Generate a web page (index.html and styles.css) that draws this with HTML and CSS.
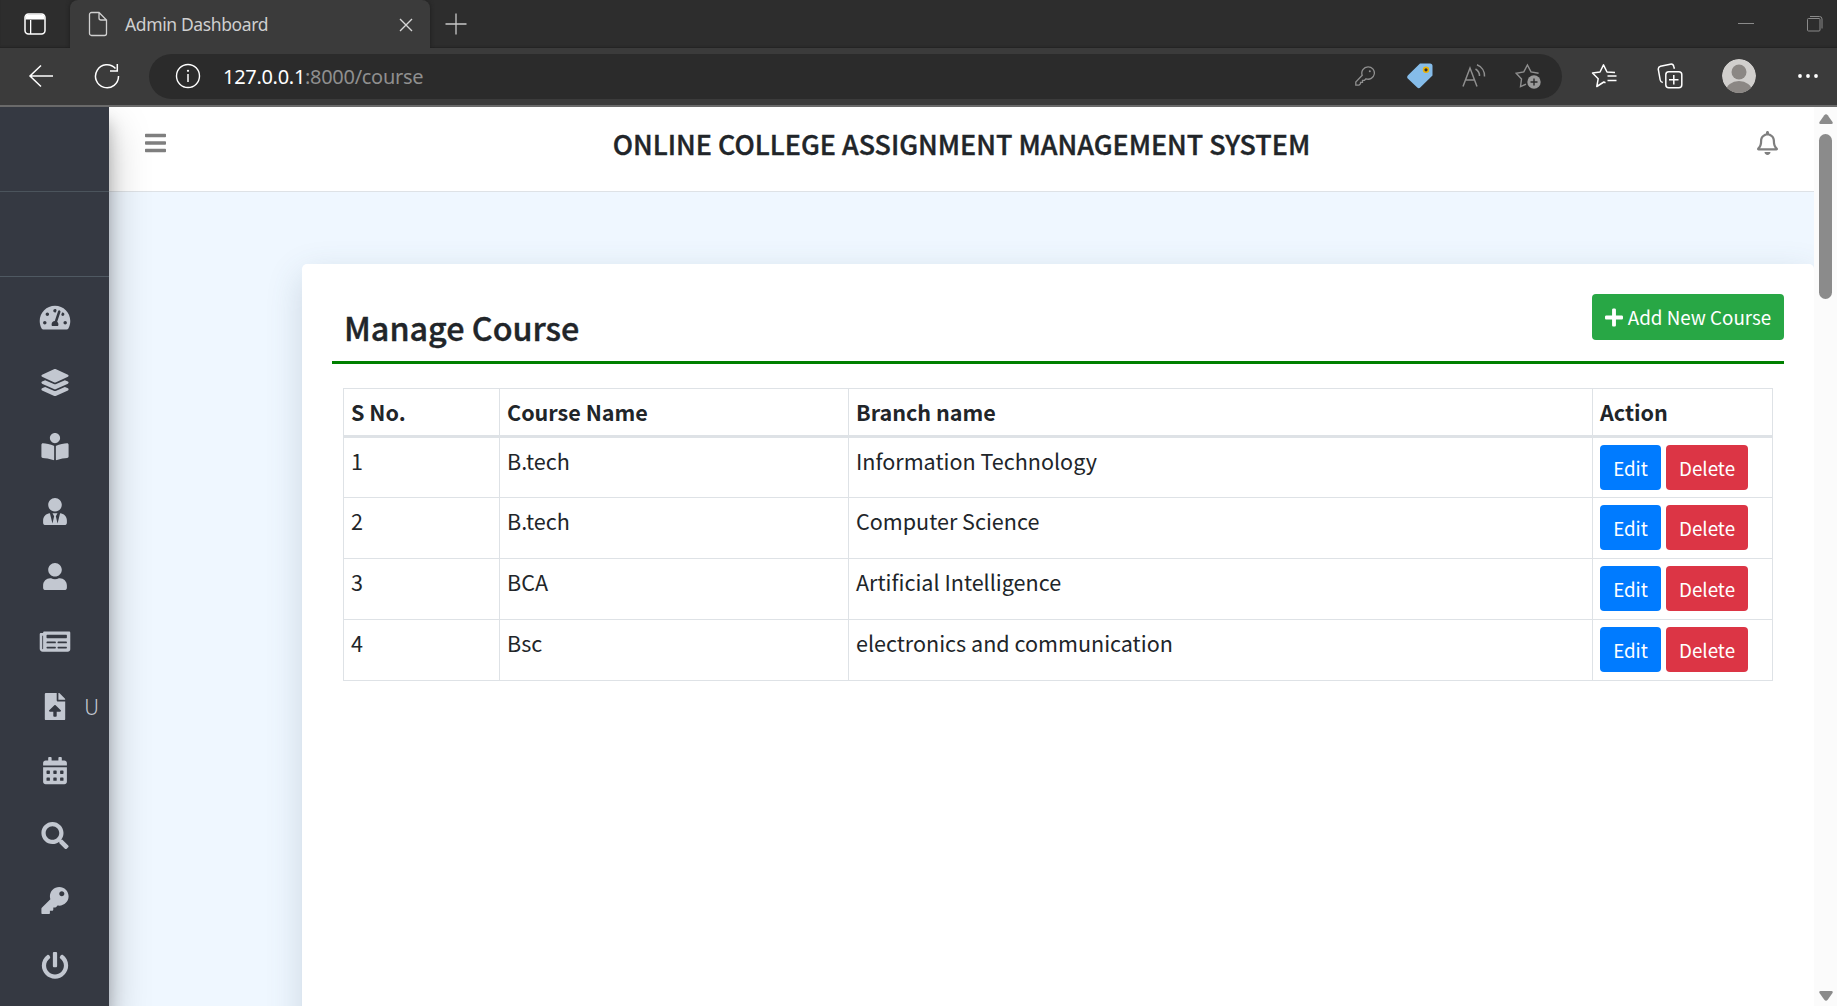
FILE: index.html
```html
<!DOCTYPE html>
<html lang="en">
<head>
<meta charset="utf-8">
<title>Admin Dashboard</title>
<link rel="stylesheet" href="styles.css">
</head>
<body>
<header class="browser">
  <div class="tabstrip">
    <svg class="tab-actions" width="22" height="22" viewBox="0 0 22 22"><rect x="1" y="1" width="20" height="20" rx="3.5" fill="none" stroke="#fff" stroke-width="1.5"/><path d="M1.500 4.500a3 3 0 0 1 3-3h13a3 3 0 0 1 3 3V6.500h-19zM6 6v15h1.300V6z" fill="#fff"/></svg>
    <div class="tab">
      <svg class="tab-file" width="20" height="26" viewBox="0 0 20 26" fill="none" stroke="#d0d0d0" stroke-width="1.300"><path d="M3.500 1.500h7.500L18.500 9v13.500a2 2 0 0 1-2 2h-13a2 2 0 0 1-2-2v-19a2 2 0 0 1 2-2zM11 1.500V7a2 2 0 0 0 2 2h5.500"/></svg>
      <span class="tab-title">Admin Dashboard</span>
      <svg class="tab-close" width="14" height="14" viewBox="0 0 14 14" stroke="#d6d6d6" stroke-width="1.400"><path d="M1 1l12 12M13 1L1 13"/></svg>
    </div>
    <svg class="tab-new" width="22" height="22" viewBox="0 0 22 22" stroke="#c8c8c8" stroke-width="1.300"><path d="M11 .5v21M.5 11h21"/></svg>
    <svg class="win-min" width="16" height="16" viewBox="0 0 16 16"><path d="M0 7.500h16" stroke="#8a8a8a"/></svg>
    <svg class="win-max" width="16" height="16" viewBox="0 0 16 16" fill="none" stroke="#8a8a8a"><rect x=".5" y="2.500" width="12.500" height="12.500" rx="1"/><path d="M3 .5h9.500a2.500 2.500 0 0 1 2.500 2.500v9.500"/></svg>
  </div>
  <div class="toolbar">
    <svg class="nav-back" width="26" height="24" viewBox="0 0 26 24" fill="none" stroke="#fff" stroke-width="1.500"><path d="M25 12H2M13 1.500L2 12l11 10.500"/></svg>
    <svg class="nav-reload" width="26" height="26" viewBox="0 0 26 26" fill="none" stroke="#fff" stroke-width="1.500"><path d="M24.500 13A11.500 11.500 0 1 1 21.500 5.500M23.300 1v7h-7.300"/></svg>
    <div class="address">
      <svg class="info" width="26" height="26" viewBox="0 0 26 26"><circle cx="13" cy="13" r="11.500" fill="none" stroke="#fff" stroke-width="1.400"/><path d="M13 11v8" stroke="#fff" stroke-width="1.500"/><circle cx="13" cy="7.800" r="1.100" fill="#fff"/></svg>
      <span class="url"><b>127.0.0.1</b>:8000/course</span>
      <svg class="a-key" width="20" height="20" viewBox="0 0 20 20" fill="none" stroke="#8f8f8f" stroke-width="1.300"><path d="M13 .8a6.200 6.200 0 1 1-2 12L9.500 14.300H7.500v2H5.500v1.500L4 19.200H.8V16L7.200 9.300A6.300 6.300 0 0 1 13 .8z"/><circle cx="14.800" cy="5.300" r="1" fill="#8f8f8f" stroke="none"/></svg>
      <svg class="a-tag" width="26" height="26" viewBox="0 0 26 26"><path d="M13 .5h10A2.500 2.500 0 0 1 25.500 3v9.500L13.500 24.300a2.500 2.500 0 0 1-3.500 0L1 15.800a2.500 2.500 0 0 1 0-3.500z" fill="#85bce9"/><circle cx="19" cy="6.800" r="3.200" fill="#eab308"/><circle cx="19" cy="6.800" r="1.600" fill="#30302c"/></svg>
      <svg class="a-read" width="24" height="24" viewBox="0 0 24 24" fill="none" stroke="#8f8f8f" stroke-width="1.500"><path d="M1 22.500L8 4l7 18.500M3.500 16h9M13.500 5a8 8 0 0 1 4 7M15 .8a12 12 0 0 1 7.500 11.700"/></svg>
      <svg class="a-star" width="26" height="26" viewBox="0 0 26 26" fill="none" stroke="#8f8f8f" stroke-width="1.400"><path d="M11 21.200l-5.500 2.500 1-7.700L1.200 10.300l7.600-1.400L12.400 2l3.600 6.900 7.600 1.400"/><circle cx="19" cy="19" r="6.700" fill="#9a9a9a" stroke="none"/><path d="M19 15.500v7M15.500 19h7" stroke="#2b2b2b"/></svg>
    </div>
    <svg class="t-fav" width="26" height="26" viewBox="0 0 26 26" fill="none" stroke="#fff" stroke-width="1.500" stroke-linejoin="round"><path d="M14.500 19.800L12.800 19 5.800 23.500l1.400-7.800L1.500 10l7.500-1L12.500 1.800 16 9l8 .5M16.500 13h9M16.500 17.500h9"/></svg>
    <svg class="t-coll" width="26" height="26" viewBox="0 0 26 26" fill="none" stroke="#fff" stroke-width="1.500"><rect x="8.800" y="8.800" width="16" height="16" rx="3"/><path d="M16.800 12v9.500M12 16.800h9.500M5.800 19.500A3 3 0 0 1 3.200 17L1.300 6.500A3 3 0 0 1 3.500 3.300L13.300 1.200A3 3 0 0 1 16.800 3.500l.6 2.300"/></svg>
    <svg class="t-user" width="34" height="34" viewBox="0 0 34 34"><defs><clipPath id="av"><circle cx="17" cy="17" r="17"/></clipPath></defs><g clip-path="url(#av)"><circle cx="17" cy="17" r="17" fill="#d1cfcd"/><circle cx="17" cy="13" r="7.500" fill="#8b8784"/><ellipse cx="17" cy="32" rx="13" ry="10" fill="#8b8784"/></g></svg>
    <svg class="t-more" width="20" height="6" viewBox="0 0 20 6" fill="#fff"><circle cx="2" cy="3" r="1.900"/><circle cx="10" cy="3" r="1.900"/><circle cx="18" cy="3" r="1.900"/></svg>
  </div>
</header>
<div class="page">
  <aside class="sidebar">
    <div class="brand"></div>
    <div class="user-panel"></div>
    <nav class="menu">
      <a class="item"><svg viewBox="-32 0 640 512"><path d="M288 32C128.940 32 0 160.940 0 320c0 52.800 14.250 102.260 39.060 144.800 5.610 9.620 16.300 15.200 27.440 15.200h443c11.140 0 21.830-5.580 27.440-15.200C561.750 422.260 576 372.800 576 320c0-159.060-128.940-288-288-288zm0 64c14.710 0 26.580 10.130 30.320 23.650-1.110 2.260-2.640 4.230-3.450 6.670l-9.220 27.670c-5.130 3.490-10.970 6.010-17.640 6.010-17.670 0-32-14.330-32-32S270.330 96 288 96zM96 384c-17.670 0-32-14.330-32-32s14.330-32 32-32 32 14.330 32 32-14.330 32-32 32zm48-160c-17.670 0-32-14.330-32-32s14.330-32 32-32 32 14.330 32 32-14.330 32-32 32zm246.770-72.410l-61.330 184C343.130 347.330 352 364.540 352 384c0 11.720-3.380 22.550-8.880 32H232.880c-5.500-9.450-8.880-20.280-8.880-32 0-33.940 26.500-61.430 59.900-63.590l61.340-184.010c4.170-12.560 17.730-19.450 30.360-15.170 12.570 4.190 19.350 17.790 15.170 30.360zm14.660 57.200l15.520-46.550c3.470-1.290 7.130-2.230 11.050-2.230 17.670 0 32 14.330 32 32s-14.330 32-32 32c-11.380-.01-20.890-6.280-26.570-15.220zM480 384c-17.670 0-32-14.330-32-32s14.330-32 32-32 32 14.330 32 32-14.330 32-32 32z"/></svg></a>
      <a class="item"><svg viewBox="-64 0 640 512"><path d="M12.410 148.020l232.940 105.670c6.800 3.090 14.490 3.090 21.290 0l232.940-105.670c16.550-7.510 16.550-32.520 0-40.030L266.650 2.310a25.607 25.607 0 0 0-21.290 0L12.410 107.980c-16.550 7.510-16.550 32.530 0 40.040zm487.180 88.280l-58.090-26.330-161.640 73.270c-7.560 3.430-15.590 5.170-23.860 5.170s-16.290-1.740-23.860-5.170L70.510 209.970l-58.100 26.330c-16.550 7.500-16.550 32.500 0 40l232.940 105.590c6.800 3.080 14.490 3.080 21.290 0L499.590 276.300c16.550-7.500 16.550-32.500 0-40zm0 127.800l-57.870-26.230-161.860 73.370c-7.560 3.430-15.590 5.170-23.860 5.170s-16.290-1.740-23.860-5.170L70.290 337.870 12.410 364.100c-16.550 7.500-16.550 32.500 0 40l232.940 105.590c6.800 3.080 14.490 3.080 21.290 0L499.590 404.100c16.550-7.500 16.550-32.500 0-40z"/></svg></a>
      <a class="item"><svg viewBox="-64 0 640 512"><path d="M352 96c0-53.020-42.980-96-96-96s-96 42.980-96 96 42.980 96 96 96 96-42.980 96-96zM233.590 241.100c-59.330-36.320-155.430-46.300-203.790-49.050C13.550 191.130 0 203.510 0 219.140v222.800c0 14.330 11.590 26.280 26.490 27.050 43.660 2.290 131.990 10.680 193.040 41.430 9.370 4.720 20.480-1.710 20.480-11.870V252.560c-.01-4.670-2.320-8.950-6.420-11.460zm248.610-49.050c-48.350 2.740-144.460 12.730-203.780 49.050-4.100 2.510-6.410 6.960-6.410 11.630v245.790c0 10.190 11.140 16.630 20.540 11.900 61.040-30.720 149.320-39.110 192.970-41.400 14.900-.78 26.490-12.730 26.490-27.060V219.140c-.01-15.630-13.560-28.010-29.810-27.090z"/></svg></a>
      <a class="item"><svg viewBox="-96 0 640 512"><path d="M224 256c70.700 0 128-57.300 128-128S294.700 0 224 0 96 57.300 96 128s57.300 128 128 128zm95.800 32.600L272 480l-32-136 32-56h-96l32 56-32 136-47.800-191.400C56.900 292 0 350.300 0 422.400V464c0 26.500 21.500 48 48 48h352c26.500 0 48-21.500 48-48v-41.600c0-72.100-56.900-130.400-128.200-133.800z"/></svg></a>
      <a class="item"><svg viewBox="-96 0 640 512"><path d="M224 256c70.700 0 128-57.300 128-128S294.700 0 224 0 96 57.300 96 128s57.300 128 128 128zm89.600 32h-16.700c-22.200 10.200-46.900 16-72.900 16s-50.600-5.800-72.900-16h-16.700C60.200 288 0 348.200 0 422.400V464c0 26.500 21.500 48 48 48h352c26.500 0 48-21.500 48-48v-41.600c0-74.200-60.200-134.400-134.400-134.400z"/></svg></a>
      <a class="item"><svg viewBox="-32 0 640 512"><path fill-rule="evenodd" d="M552 64H88c-13.255 0-24 10.745-24 24v8H24c-13.255 0-24 10.745-24 24v272c0 30.928 25.072 56 56 56h472c26.510 0 48-21.490 48-48V88c0-13.255-10.745-24-24-24zM56 400a8 8 0 0 1-8-8V144h16v248a8 8 0 0 1-8 8zm236-16H140c-6.627 0-12-5.373-12-12v-8c0-6.627 5.373-12 12-12h152c6.627 0 12 5.373 12 12v8c0 6.627-5.373 12-12 12zm208 0H348c-6.627 0-12-5.373-12-12v-8c0-6.627 5.373-12 12-12h152c6.627 0 12 5.373 12 12v8c0 6.627-5.373 12-12 12zm-208-96H140c-6.627 0-12-5.373-12-12v-8c0-6.627 5.373-12 12-12h152c6.627 0 12 5.373 12 12v8c0 6.627-5.373 12-12 12zm208 0H348c-6.627 0-12-5.373-12-12v-8c0-6.627 5.373-12 12-12h152c6.627 0 12 5.373 12 12v8c0 6.627-5.373 12-12 12zm0-96H140c-6.627 0-12-5.373-12-12v-40c0-6.627 5.373-12 12-12h360c6.627 0 12 5.373 12 12v40c0 6.627-5.373 12-12 12z"/></svg></a>
      <a class="item"><svg viewBox="-128 0 640 512"><path d="M224 136V0H24C10.700 0 0 10.700 0 24v464c0 13.300 10.700 24 24 24h336c13.300 0 24-10.700 24-24V160H248c-13.200 0-24-10.800-24-24zm65.180 216.010H224v80c0 8.840-7.160 16-16 16h-32c-8.840 0-16-7.160-16-16v-80H94.820c-14.280 0-21.410-17.290-11.270-27.360l96.420-95.700c6.650-6.610 17.390-6.610 24.040 0l96.420 95.700c10.150 10.070 3.030 27.360-11.250 27.360zM377 105L279.100 7c-4.500-4.500-10.600-7-17-7H256v128h128v-6.100c0-6.300-2.500-12.400-7-16.900z"/></svg><span class="label">U</span></a>
      <a class="item"><svg viewBox="-96 0 640 512"><path fill-rule="evenodd" d="M0 464c0 26.500 21.500 48 48 48h352c26.500 0 48-21.500 48-48V192H0zM332 256h40a12 12 0 0 1 12 12v40a12 12 0 0 1-12 12h-40a12 12 0 0 1-12-12v-40a12 12 0 0 1 12-12zm0 128h40a12 12 0 0 1 12 12v40a12 12 0 0 1-12 12h-40a12 12 0 0 1-12-12v-40a12 12 0 0 1 12-12zM204 256h40a12 12 0 0 1 12 12v40a12 12 0 0 1-12 12h-40a12 12 0 0 1-12-12v-40a12 12 0 0 1 12-12zm0 128h40a12 12 0 0 1 12 12v40a12 12 0 0 1-12 12h-40a12 12 0 0 1-12-12v-40a12 12 0 0 1 12-12zM76 256h40a12 12 0 0 1 12 12v40a12 12 0 0 1-12 12H76a12 12 0 0 1-12-12v-40a12 12 0 0 1 12-12zm0 128h40a12 12 0 0 1 12 12v40a12 12 0 0 1-12 12H76a12 12 0 0 1-12-12v-40a12 12 0 0 1 12-12zM400 64h-48V16c0-8.800-7.200-16-16-16h-32c-8.800 0-16 7.200-16 16v48H160V16c0-8.800-7.200-16-16-16h-32c-8.800 0-16 7.200-16 16v48H48C21.500 64 0 85.500 0 112v48h448v-48c0-26.500-21.500-48-48-48z"/></svg></a>
      <a class="item"><svg viewBox="-64 0 640 512"><path d="M505 442.700L405.300 343c-4.500-4.500-10.600-7-17-7H372c27.600-35.300 44-79.700 44-128C416 93.100 322.900 0 208 0S0 93.100 0 208s93.100 208 208 208c48.300 0 92.700-16.400 128-44v16.300c0 6.400 2.500 12.500 7 17l99.700 99.700c9.400 9.400 24.600 9.400 33.900 0l28.300-28.300c9.400-9.400 9.400-24.600.1-34zM208 336c-70.700 0-128-57.200-128-128 0-70.700 57.200-128 128-128 70.700 0 128 57.200 128 128 0 70.700-57.200 128-128 128z"/></svg></a>
      <a class="item"><svg viewBox="-64 0 640 512"><path d="M512 176.001C512 273.203 433.202 352 336 352c-11.220 0-22.190-1.062-32.827-3.069l-24.012 27.014A23.999 23.999 0 0 1 261.223 384H224v40c0 13.255-10.745 24-24 24h-40v40c0 13.255-10.745 24-24 24H24c-13.255 0-24-10.745-24-24v-78.059c0-6.365 2.529-12.470 7.029-16.971l161.802-161.802C163.108 213.814 160 195.271 160 176 160 78.798 238.797.001 335.999 0 433.488-.001 512 78.511 512 176.001zM336 128c0 26.510 21.490 48 48 48s48-21.490 48-48-21.490-48-48-48-48 21.490-48 48z"/></svg></a>
      <a class="item"><svg viewBox="-64 0 640 512"><path d="M400 54.100c63 45 104 118.600 104 201.900 0 136.800-110.800 247.700-247.500 248C120 504.300 8.200 393 8 256.400 7.900 173.100 48.900 99.300 111.800 54.200c11.700-8.300 28-4.800 35 7.700L162.600 90c5.900 10.500 3.100 23.800-6.600 31-41.500 30.800-68 79.600-68 134.900-.1 92.300 74.500 168.100 168 168.100 91.600 0 168.600-74.200 168-169.100-.3-51.800-24.700-101.800-68.100-134-9.700-7.200-12.400-20.500-6.500-30.900l15.800-28.100c7-12.400 23.200-16.100 34.800-7.800zM296 264V24c0-13.300-10.700-24-24-24h-32c-13.300 0-24 10.700-24 24v240c0 13.300 10.700 24 24 24h32c13.300 0 24-10.700 24-24z"/></svg></a>
    </nav>
  </aside>
  <div class="main">
    <div class="navbar">
      <svg class="bars" viewBox="0 0 448 512" width="21" height="24"><path d="M16 132h416c8.837 0 16-7.163 16-16V76c0-8.837-7.163-16-16-16H16C7.163 60 0 67.163 0 76v40c0 8.837 7.163 16 16 16zm0 160h416c8.837 0 16-7.163 16-16v-40c0-8.837-7.163-16-16-16H16c-8.837 0-16 7.163-16 16v40c0 8.837 7.163 16 16 16zm0 160h416c8.837 0 16-7.163 16-16v-40c0-8.837-7.163-16-16-16H16c-8.837 0-16 7.163-16 16v40c0 8.837 7.163 16 16 16z"/></svg>
      <h1 class="app-title">ONLINE COLLEGE ASSIGNMENT MANAGEMENT SYSTEM</h1>
      <svg class="bell" viewBox="0 0 448 512" width="21" height="24"><path d="M439.390 362.290c-19.320-20.760-55.470-51.990-55.470-154.290 0-77.700-54.480-139.900-127.940-155.160V32c0-17.670-14.320-32-31.980-32s-31.980 14.330-31.980 32v20.840C118.560 68.100 64.080 130.300 64.080 208c0 102.300-36.150 133.530-55.470 154.290-6 6.450-8.660 14.160-8.610 21.710.11 16.400 12.980 32 32.100 32h383.800c19.120 0 32-15.600 32.100-32 .05-7.550-2.610-15.270-8.610-21.710zM67.530 368c21.220-27.970 44.420-74.330 44.530-159.420 0-.2-.06-.38-.06-.58 0-61.860 50.140-112 112-112s112 50.140 112 112c0 .2-.06.38-.06.58.11 85.100 23.310 131.460 44.530 159.420H67.530zM224 512c35.320 0 63.970-28.650 63.970-64H160.030c0 35.350 28.650 64 63.970 64z"/></svg>
    </div>
    <div class="content">
      <section class="card">
        <div class="card-head">
          <h2 class="card-title">Manage Course</h2>
          <a class="btn btn-add"><svg width="18" height="21" viewBox="0 0 448 512" fill="#fff"><path d="M416 208H272V64c0-17.670-14.330-32-32-32h-32c-17.670 0-32 14.330-32 32v144H32c-17.670 0-32 14.330-32 32v32c0 17.670 14.330 32 32 32h144v144c0 17.670 14.330 32 32 32h32c17.670 0 32-14.330 32-32V304h144c17.670 0 32-14.330 32-32v-32c0-17.670-14.330-32-32-32z"/></svg><span>Add New Course</span></a>
        </div>
        <table class="courses">
          <colgroup><col class="c-no"><col class="c-name"><col class="c-branch"><col class="c-action"></colgroup>
          <thead><tr><th>S No.</th><th>Course Name</th><th>Branch name</th><th>Action</th></tr></thead>
          <tbody>
            <tr><td>1</td><td>B.tech</td><td>Information Technology</td><td><div class="actions"><a class="btn btn-edit">Edit</a><a class="btn btn-delete">Delete</a></div></td></tr>
            <tr><td>2</td><td>B.tech</td><td>Computer Science</td><td><div class="actions"><a class="btn btn-edit">Edit</a><a class="btn btn-delete">Delete</a></div></td></tr>
            <tr><td>3</td><td>BCA</td><td>Artificial Intelligence</td><td><div class="actions"><a class="btn btn-edit">Edit</a><a class="btn btn-delete">Delete</a></div></td></tr>
            <tr><td>4</td><td>Bsc</td><td>electronics and communication</td><td><div class="actions"><a class="btn btn-edit">Edit</a><a class="btn btn-delete">Delete</a></div></td></tr>
          </tbody>
        </table>
      </section>
    </div>
  </div>
  <div class="scrollbar">
    <svg width="14" height="10" viewBox="0 0 14 10"><path d="M5.300 1.200q1.700-2 3.400 0L13.500 8q.8 2-1 2h-11q-1.800 0-1-2z" fill="#8b8b8b"/></svg>
    <div class="thumb"></div>
    <svg width="14" height="10" viewBox="0 0 14 10"><path d="M5.300 8.800q1.700 2 3.400 0L13.500 2q.8-2-1-2h-11q-1.800 0-1 2z" fill="#8b8b8b"/></svg>
  </div>
</div>
</body>
</html>
```
FILE: styles.css
```css
* { box-sizing: border-box; }
body {
  margin: 0;
  width: 1837px;
  height: 1006px;
  overflow: hidden;
  display: flex;
  flex-direction: column;
  font-family: "Noto Sans CJK SC", "Source Sans Pro", sans-serif;
  font-size: 21.55px;
  color: #212529;
  background: #fff;
}
svg { display: block; flex: none; }
h1, h2 { margin: 0; font-weight: 500; -webkit-text-stroke: .4px currentColor; }

/* browser window */
.browser { flex: none; height: 107px; border-bottom: 2px solid #6a6a6a; background: #3b3b3b; font-family: "Noto Sans", sans-serif; }
.tabstrip { height: 48px; display: flex; align-items: center; background: #2d2d2d; box-shadow: inset 0 -2px 2px -1px #222; }
.tab-actions { margin: 0 24px; }
.tab { width: 360px; height: 48px; display: flex; align-items: center; padding: 0 17px 0 18px; background: #3b3b3b; border-radius: 8px 8px 0 0; box-shadow: 0 0 4px #1c1c1c; clip-path: inset(0 -6px); }
.tab-title { flex: 1; margin-left: 17px; font-size: 17.5px; letter-spacing: -.38px; line-height: 24px; padding-bottom: 1px; color: #cfcfcf; }
.tab-close { margin-top: 2px; }
.tab-new { margin-left: 15px; margin-right: auto; }
.win-min { margin-right: 53px; }
.win-max { margin-right: 14px; }
.toolbar { height: 57px; display: flex; align-items: center; padding-bottom: 1px; }
.nav-back { margin: 0 40px 0 28px; }
.address { width: 1413px; height: 45px; margin: 0 29px 0 29px; padding: 0 21px 0 26px; display: flex; align-items: center; border-radius: 23px; background: #2b2b2b; }
.url { flex: 1; margin-left: 22px; font-size: 20px; letter-spacing: -.3px; line-height: 27px; color: #8f8f8f; }
.url b { font-weight: 400; color: #fff; }
.a-tag { margin-left: 32px; }
.a-read { margin-left: 29px; }
.a-star { margin-left: 29px; }
.t-coll { margin-left: 40px; }
.t-user { margin-left: 39px; }
.t-more { margin-left: 42px; }

/* page */
.page { flex: 1; min-height: 0; display: flex; overflow: hidden; }
.sidebar { position: relative; z-index: 2; flex: none; width: 109px; background: #353942; box-shadow: 0 21px 42px rgba(0,0,0,.25), 0 15px 15px rgba(0,0,0,.22); }
.brand { height: 85px; border-bottom: 1px solid #4b545c; }
.user-panel { height: 85px; border-bottom: 1px solid #4f5962; }
.menu { display: flex; flex-direction: column; padding-top: 8px; }
.item { height: 64.8px; display: flex; align-items: center; padding-left: 38px; }
.item svg { width: 34px; height: 27.2px; fill: #c2c7d0; }
.label { margin-left: 12px; font-size: 21.6px; font-weight: 300; color: #c2c7d0; line-height: 32px; }
.main { flex: 1; min-width: 0; display: flex; flex-direction: column; }
.navbar { flex: none; height: 85px; display: flex; align-items: flex-start; justify-content: space-between; padding: 24px 36px 0; border-bottom: 1px solid #dee2e6; background: #fff; }
.navbar svg { fill: #7f7f7f; }
.app-title { font-size: 26.9px; line-height: 25px; white-space: nowrap; }
.content { flex: 1; min-height: 0; padding: 72px 0 0 193px; background: #eff7ff; overflow: hidden; }
.card { height: 1000px; padding: 30px 30px 0; border-radius: 5px; background: #fff; box-shadow: 0 12px 36px rgba(60,90,110,.2); }
.card-head { display: flex; justify-content: space-between; align-items: flex-start; height: 70px; padding-left: 12px; border-bottom: 3px solid #008000; }
.card-title { font-size: 32.3px; line-height: 40px; margin-top: 13px; }
.btn { display: flex; align-items: center; justify-content: center; height: 45px; border-radius: 4px; font-size: 18.8px; line-height: 30px; color: #fff; }
.btn-add { width: 192px; height: 46px; gap: 5px; background: #28a745; }
.btn-edit { width: 61px; background: #007bff; }
.btn-delete { width: 82px; background: #dc3545; }
.actions { display: flex; gap: 5px; }
.courses { width: 1430px; margin: 24px 0 0 11px; border-collapse: collapse; table-layout: fixed; }
.c-no { width: 156px; }
.c-name { width: 349px; }
.c-branch { width: 744px; }
.courses th, .courses td { border: 1px solid #dee2e6; padding: 7px 7px 0; vertical-align: top; text-align: left; line-height: 32px; }
.courses th { height: 48px; border-bottom-width: 3px; font-weight: 700; }
.courses td { height: 61px; }
.scrollbar { flex: none; width: 23px; display: flex; flex-direction: column; align-items: center; padding: 7px 0 5px; background: #fbfbfb; }
.thumb { width: 13px; height: 165px; margin: 10px 0 auto; border-radius: 7px; background: #8b8b8b; }
```
